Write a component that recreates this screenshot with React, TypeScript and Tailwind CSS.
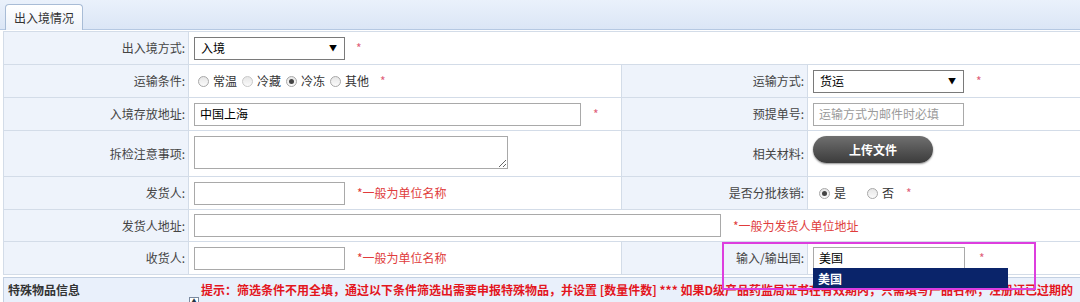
import React from "react";

// Small helpers for the legacy form look
function Label({ children, className = "" }: { children: React.ReactNode; className?: string }) {
  return (
    <div
      className={
        "flex items-center justify-end pr-[3px] bg-[#eef3fb] border-r border-b border-[#d3dce8] text-[#444] " +
        className
      }
    >
      {children}
    </div>
  );
}

function Cell({ children, className = "" }: { children?: React.ReactNode; className?: string }) {
  return (
    <div className={"flex items-center pl-[5px] bg-white border-r border-b border-[#d3dce8] " + className}>
      {children}
    </div>
  );
}

function Req({ className = "" }: { className?: string }) {
  return <span className={"text-[#e0607a] text-[12px] leading-none " + className}>*</span>;
}

function Hint({ children, className = "" }: { children: React.ReactNode; className?: string }) {
  return <span className={"text-[#e03c3c] " + className}>{children}</span>;
}

function Box({
  width,
  value,
  placeholder,
  className = "",
}: {
  width: string;
  value?: string;
  placeholder?: string;
  className?: string;
}) {
  return (
    <div
      className={
        "h-[23px] flex items-center pl-[5px] bg-white border border-[#a9a9a9] text-black " + width + " " + className
      }
    >
      {value ? <span>{value}</span> : <span className="text-[#9a9a9a]">{placeholder}</span>}
    </div>
  );
}

function Select({ value }: { value: string }) {
  return (
    <div className="h-[23px] w-[151px] flex items-center justify-between pl-[6px] pr-[7px] bg-white border border-[#7a7a7a] text-black">
      <span>{value}</span>
      <span className="text-[8px] leading-none">▼</span>
    </div>
  );
}

function Radio({ checked = false, label, faded = false }: { checked?: boolean; label: string; faded?: boolean }) {
  return (
    <span className="flex items-center gap-[4px]">
      <span
        className={
          "w-[11px] h-[11px] rounded-full border flex items-center justify-center bg-gradient-to-b from-[#e6e6e6] to-[#fbfbfb] " +
          (faded ? "border-[#c8c8c8]" : "border-[#a8a8a8]")
        }
      >
        {checked && <span className="w-[5px] h-[5px] rounded-full bg-[#444]" />}
      </span>
      <span className="text-[#333]">{label}</span>
    </span>
  );
}

export default function App() {
  return (
    <div className="relative w-[1080px] h-[302px] overflow-hidden bg-white text-[12px] leading-none font-[family-name:Noto_Sans_CJK_SC,sans-serif]">
      {/* tab strip */}
      <div className="h-[30px] pl-[5px] pt-[4px] flex items-end bg-gradient-to-b from-[#eaf1fb] to-[#dbe6f6] border-b border-[#b5c8e2]">
        <div className="h-[26px] w-[78px] -mb-px flex items-center justify-center rounded-t-[4px] border border-b-0 border-[#a8bcd6] bg-gradient-to-b from-white to-[#eef3fb] text-[#333]">
          出入境情况
        </div>
      </div>

      {/* form grid */}
      <div className="ml-[3px] mt-px w-[1200px] grid grid-cols-[185px_433px_186px_1fr] grid-rows-[33px_33px_33px_46px_33px_32px_33px] border-l border-t border-[#d3dce8]">
        <Label>出入境方式:</Label>
        <Cell className="col-span-3 gap-[11px]">
          <Select value="入境" />
          <Req />
        </Cell>

        <Label>运输条件:</Label>
        <Cell className="pl-[9px] gap-[5px]">
          <Radio label="常温" />
          <Radio label="冷藏" faded />
          <Radio label="冷冻" checked />
          <Radio label="其他" />
          <Req className="ml-[6px]" />
        </Cell>
        <Label>运输方式:</Label>
        <Cell className="gap-[12px]">
          <Select value="货运" />
          <Req />
        </Cell>

        <Label>入境存放地址:</Label>
        <Cell className="gap-[12px]">
          <Box width="w-[387px]" value="中国上海" />
          <Req />
        </Cell>
        <Label>预提单号:</Label>
        <Cell>
          <Box width="w-[151px]" placeholder="运输方式为邮件时必填" />
        </Cell>

        <Label>拆检注意事项:</Label>
        <Cell className="items-start pt-[5px]">
          <textarea
            readOnly
            className="w-[314px] h-[33px] border border-[#a9a9a9] bg-white outline-none"
          />
        </Cell>
        <Label>相关材料:</Label>
        <Cell className="items-start pt-[5px]">
          <div className="w-[120px] h-[27px] rounded-full flex items-center justify-center bg-gradient-to-b from-[#707070] to-[#3c3c3c] text-white font-bold shadow-[0_1px_2px_rgba(0,0,0,0.45)]">
            上传文件
          </div>
        </Cell>

        <Label>发货人:</Label>
        <Cell className="gap-[12px]">
          <Box width="w-[151px]" />
          <Hint>*一般为单位名称</Hint>
        </Cell>
        <Label>是否分批核销:</Label>
        <Cell className="pl-[11px]">
          <Radio label="是" checked />
          <span className="ml-[21px]">
            <Radio label="否" />
          </span>
          <Req className="ml-[12px]" />
        </Cell>

        <Label>发货人地址:</Label>
        <Cell className="col-span-3 gap-[12px]">
          <Box width="w-[527px]" />
          <Hint>*一般为发货人单位地址</Hint>
        </Cell>

        <Label>收货人:</Label>
        <Cell className="gap-[12px]">
          <Box width="w-[151px]" />
          <Hint>*一般为单位名称</Hint>
        </Cell>
        <Label>输入/输出国:</Label>
        <Cell className="gap-[14px]">
          <Box width="w-[152px]" value="美国" className="border-[#7f9db9]" />
          <Req />
        </Cell>
      </div>

      {/* special goods section header */}
      <div className="relative ml-[3px] mt-[2px] w-[1200px] h-[30px] flex items-start pt-[6px] bg-[#e9f0fb] border-l border-t border-[#c3d0e2]">
        <span className="pl-[4px] w-[197px] font-bold text-[#333]">特殊物品信息</span>
        <span className="font-bold text-[#e3161e] whitespace-nowrap">
          提示：筛选条件不用全填，通过以下条件筛选出需要申报特殊物品，并设置 [数量件数] *** 如果D级产品药监局证书在有效期内，只需填写产品名称，注册证已过期的
        </span>
        <span className="absolute left-[185px] top-[19px] w-[10px] h-[6px] border border-b-0 border-[#7a8aa0] bg-white flex items-start justify-center text-[6px] text-[#234]">
          ▲
        </span>
      </div>

      {/* autocomplete dropdown */}
      <div className="absolute left-[813px] top-[268px] w-[195px] h-[22px] flex items-center pl-[5px] bg-[#0a246a] text-white font-bold">
        美国
      </div>

      {/* annotation highlight */}
      <div className="absolute left-[722px] top-[242px] w-[314px] h-[48px] border-2 border-[#dd3ede]" />
    </div>
  );
}
